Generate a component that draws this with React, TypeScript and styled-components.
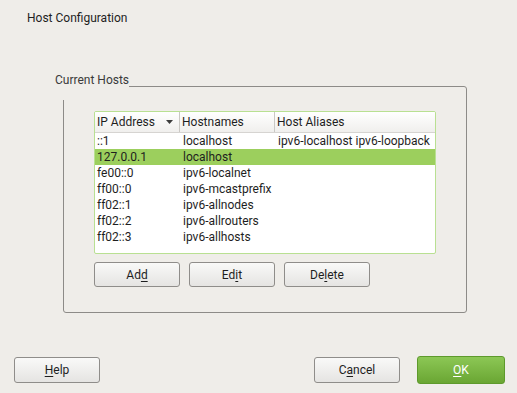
import React from 'react';
import styled, { createGlobalStyle } from 'styled-components';

const GlobalStyle = createGlobalStyle`
  html, body {
    margin: 0;
    padding: 0;
    background: #efede9;
  }
  body {
    font-family: Roboto, "Liberation Sans", sans-serif;
    font-size: 12px;
    color: #1e1e1e;
  }
`;

type Host = { ip: string; name: string; aliases: string };

const hosts: Host[] = [
  { ip: '::1', name: 'localhost', aliases: 'ipv6-localhost ipv6-loopback' },
  { ip: '127.0.0.1', name: 'localhost', aliases: '' },
  { ip: 'fe00::0', name: 'ipv6-localnet', aliases: '' },
  { ip: 'ff00::0', name: 'ipv6-mcastprefix', aliases: '' },
  { ip: 'ff02::1', name: 'ipv6-allnodes', aliases: '' },
  { ip: 'ff02::2', name: 'ipv6-allrouters', aliases: '' },
  { ip: 'ff02::3', name: 'ipv6-allhosts', aliases: '' },
];

const SELECTED = 1;

// underline one letter like a keyboard mnemonic
function Mnemonic({ text, at }: { text: string; at: number }) {
  return (
    <>
      {text.slice(0, at)}
      <u>{text[at]}</u>
      {text.slice(at + 1)}
    </>
  );
}

export default function App(): JSX.Element {
  return (
    <>
      <GlobalStyle />
      <Dialog>
        <Title>Host Configuration</Title>
        <Group>
          <Legend>Current Hosts</Legend>
          <GroupBody>
            <Table>
              <HeaderRow>
                <HeaderCell>
                  IP Address
                  <SortArrow width='7' height='4' viewBox='0 0 7 4'>
                    <path d='M0 0 H7 L3.5 4 Z' fill='#3c3c3c' />
                  </SortArrow>
                </HeaderCell>
                <HeaderCell>Hostnames</HeaderCell>
                <HeaderCell $last>Host Aliases</HeaderCell>
              </HeaderRow>
              {hosts.map((h, i) => (
                <Row key={h.ip} $selected={i === SELECTED}>
                  <Cell>{h.ip}</Cell>
                  <Cell>{h.name}</Cell>
                  <Cell>{h.aliases}</Cell>
                </Row>
              ))}
            </Table>
            <ButtonRow>
              <Button>
                <Mnemonic text='Add' at={2} />
              </Button>
              <Button>
                <Mnemonic text='Edit' at={2} />
              </Button>
              <Button>
                <Mnemonic text='Delete' at={2} />
              </Button>
            </ButtonRow>
          </GroupBody>
        </Group>
        <Footer>
          <Button>
            <Mnemonic text='Help' at={0} />
          </Button>
          <Spacer />
          <Button>
            <Mnemonic text='Cancel' at={1} />
          </Button>
          <OkButton>
            <Mnemonic text='OK' at={0} />
          </OkButton>
        </Footer>
      </Dialog>
    </>
  );
}

const Dialog = styled.div`
  display: flex;
  flex-direction: column;
  width: 517px;
  height: 393px;
  box-sizing: border-box;
`;

const Title = styled.div`
  margin: 10px 0 0 27px;
  line-height: 16px;
`;

const Group = styled.fieldset`
  margin: 46px 0 0 63px;
  width: 404px;
  box-sizing: border-box;
  padding: 0;
  border: 1px solid #8d8b88;
  border-radius: 3px;
  min-width: 0;
`;

const Legend = styled.legend`
  margin-left: -9px;
  margin-right: -16px;
  padding: 1px 0 13px 0;
  line-height: 14px;
  color: #3a3a3a;
`;

const GroupBody = styled.div`
  display: flex;
  flex-direction: column;
  gap: 8px;
  padding: 11px 30px 25px 30px;
`;

const Table = styled.div`
  width: 342px;
  height: 143px;
  box-sizing: border-box;
  border: 1px solid #b9e092;
  border-radius: 2px;
  background: #ffffff;
  overflow: hidden;
`;

const grid = `
  display: grid;
  grid-template-columns: 85px 95px 1fr;
`;

const HeaderRow = styled.div`
  ${grid}
  height: 20px;
  background: linear-gradient(#ffffff, #f0efed);
  border-bottom: 1px solid #d6d4d1;
`;

const HeaderCell = styled.div<{ $last?: boolean }>`
  display: flex;
  align-items: center;
  justify-content: space-between;
  padding: 0 6px 0 2px;
  line-height: 20px;
  border-right: ${(props) => (props.$last ? 'none' : '1px solid #cac8c4')};
`;

const SortArrow = styled.svg`
  display: block;
`;

const Row = styled.div<{ $selected?: boolean }>`
  ${grid}
  height: 16px;
  line-height: 16px;
  background: ${(props) => (props.$selected ? '#9ccf5d' : 'transparent')};
`;

const Cell = styled.div`
  padding-left: 2px;
  white-space: nowrap;
  overflow: hidden;
  & + & {
    padding-left: 3px;
  }
`;

const ButtonRow = styled.div`
  display: flex;
  gap: 9px;
`;

const Button = styled.button`
  width: 86px;
  height: 25px;
  padding: 0;
  box-sizing: border-box;
  border: 1px solid #8f8d8a;
  border-radius: 3px;
  background: linear-gradient(#f9f9f8, #e5e4e2);
  font-family: Roboto, "Liberation Sans", sans-serif;
  font-size: 12px;
  color: #1e1e1e;
  text-align: center;

  u {
    text-decoration-thickness: 1px;
    text-underline-offset: 2px;
  }
`;

const OkButton = styled(Button)`
  width: 88px;
  margin-left: 17px;
  border-color: #5e9a2c;
  background: linear-gradient(#8cc755, #6aa633);
  color: #ffffff;
`;

const Footer = styled.div`
  display: flex;
  align-items: center;
  margin-top: auto;
  padding: 0 12px 9px 14px;

  ${Button} {
    height: 26px;
  }
  ${OkButton} {
    height: 28px;
  }
`;

const Spacer = styled.div`
  flex: 1;
`;
